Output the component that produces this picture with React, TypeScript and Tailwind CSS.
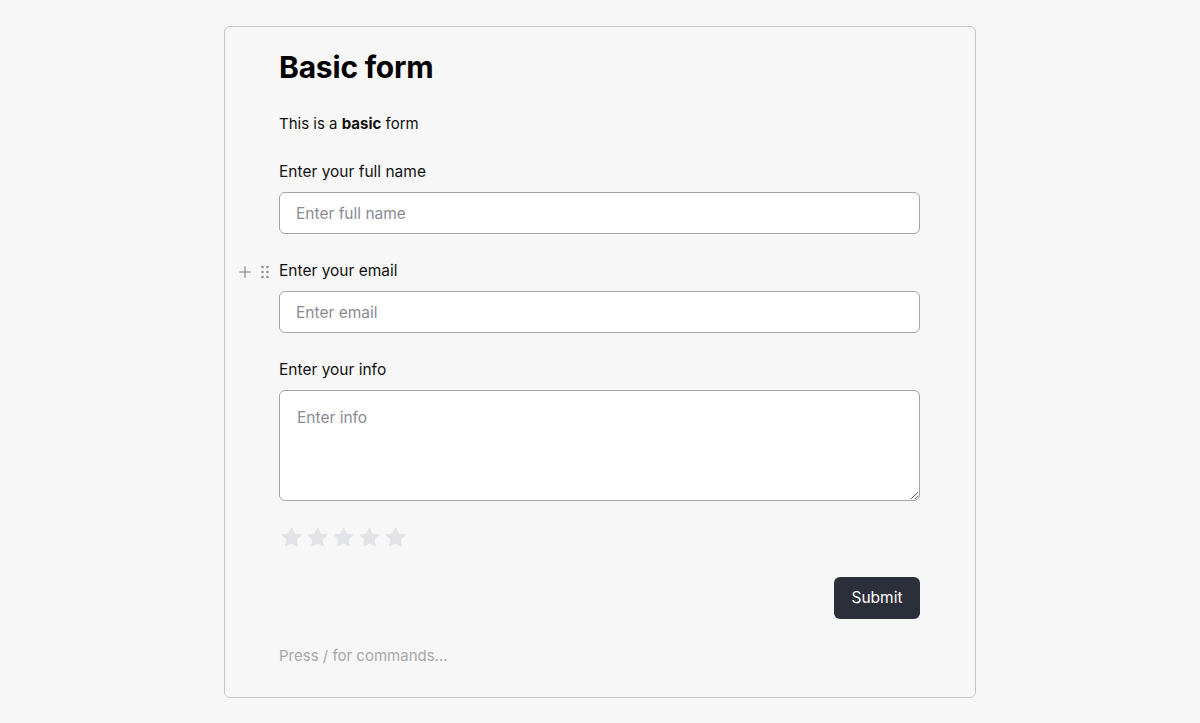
import { Plus } from "lucide-react";

const Star = () => (
  <svg viewBox="0 0 24 24" className="w-[23px] h-[23px]" fill="#e2e3e7">
    <path d="M12 2.5l2.9 6.1 6.6.8-4.9 4.6 1.3 6.6L12 17.3l-5.9 3.3 1.3-6.6-4.9-4.6 6.6-.8z" strokeLinejoin="round" stroke="#e2e3e7" strokeWidth="1.5" />
  </svg>
);

const DragHandle = () => (
  <svg viewBox="0 0 10 14" className="w-[10px] h-[14px]" fill="#8f8f8f">
    <circle cx="2.5" cy="2" r="1.3" />
    <circle cx="7.5" cy="2" r="1.3" />
    <circle cx="2.5" cy="7" r="1.3" />
    <circle cx="7.5" cy="7" r="1.3" />
    <circle cx="2.5" cy="12" r="1.3" />
    <circle cx="7.5" cy="12" r="1.3" />
  </svg>
);

export default function App() {
  return (
    <div
      className="min-h-screen bg-[#f6f7f6] pt-[26px] flex justify-center"
      style={{ fontFamily: "Inter, 'Noto Sans', sans-serif" }}
    >
      <div className="w-[752px] h-[672px] border border-[#c6c6c6] rounded-[6px] bg-[#f6f7f6] pl-[54px] pr-[55px] pt-[21px]">
        <h1 className="text-[30px] leading-[38px] font-bold text-black tracking-[-0.2px]">Basic form</h1>

        <p className="mt-[26px] text-[15px] leading-[24px] text-[#111]">
          This is a <b className="font-bold">basic</b> form
        </p>

        <div className="mt-[24px]">
          <label className="block text-[15.5px] leading-[24px] text-[#111]">Enter your full name</label>
          <input
            placeholder="Enter full name"
            className="mt-[8px] w-full h-[42px] rounded-[6px] border border-[#a3a3ab] bg-white px-[16px] text-[15.5px] placeholder:text-[#8a8a94] outline-none"
          />
        </div>

        <div className="mt-[25px] relative">
          <div className="absolute left-[-43px] top-[1px] flex items-center gap-[6px] h-[24px]">
            <Plus className="w-[18px] h-[18px] text-[#7d7d7d]" strokeWidth={1.5} />
            <DragHandle />
          </div>
          <label className="block text-[15.5px] leading-[24px] text-[#111]">Enter your email</label>
          <input
            placeholder="Enter email"
            className="mt-[8px] w-full h-[42px] rounded-[6px] border border-[#a3a3ab] bg-white px-[16px] text-[15.5px] placeholder:text-[#8a8a94] outline-none"
          />
        </div>

        <div className="mt-[25px]">
          <label className="block text-[15.5px] leading-[24px] text-[#111]">Enter your info</label>
          <textarea
            placeholder="Enter info"
            className="mt-[8px] block w-full h-[111px] rounded-[6px] border border-[#a3a3ab] bg-white px-[17px] py-[15px] text-[15.5px] leading-[24px] placeholder:text-[#8a8a94] outline-none"
          />
        </div>

        <div className="mt-[25px] flex gap-[3px] ml-[1px]">
          <Star />
          <Star />
          <Star />
          <Star />
          <Star />
        </div>

        <div className="mt-[28px] flex justify-end">
          <button className="h-[42px] w-[86px] rounded-[6px] bg-[#2b2f3a] text-white text-[15.5px]">Submit</button>
        </div>

        <p className="mt-[25px] text-[15px] leading-[24px] text-[#a8a8a8]">Press / for commands...</p>
      </div>
    </div>
  );
}
